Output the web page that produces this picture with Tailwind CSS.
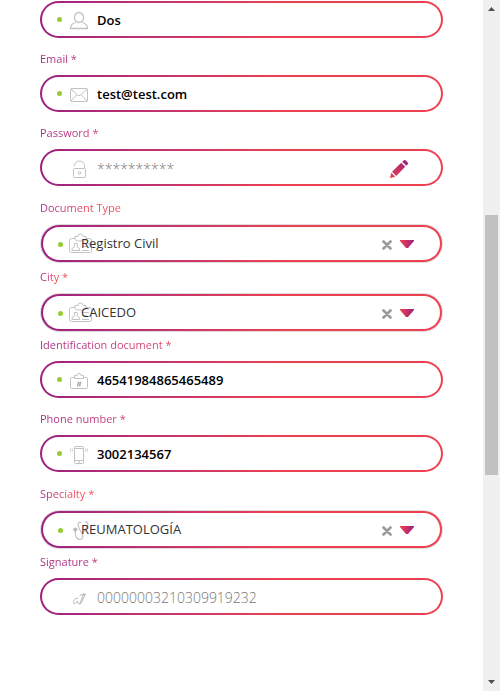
<!DOCTYPE html>
<html lang="en">
<head>
<meta charset="utf-8">
<meta name="viewport" content="width=device-width, initial-scale=1">
<title>Profile form</title>
<script src="https://cdn.jsdelivr.net/npm/@tailwindcss/browser@4"></script>
</head>
<body class="flex min-h-screen bg-white font-['Open_Sans',sans-serif] text-[13px]">
<svg class="absolute h-0 w-0" aria-hidden="true">
  <defs>
    <linearGradient id="caretFill" x1="0" y1="0" x2="1" y2="0"><stop offset="0" stop-color="#ee4050"/><stop offset="1" stop-color="#9c2080"/></linearGradient>
    <linearGradient id="penFill" x1="0" y1="1" x2="1" y2="0"><stop offset="0" stop-color="#ee4050"/><stop offset="1" stop-color="#9c2080"/></linearGradient>
    <symbol id="badge" viewBox="0 0 24 24"><g fill="none" stroke="#c2c2c2"><path d="M7 6.500H3.500a2 2 0 0 0-2 2v10a2 2 0 0 0 2 2h18a2 2 0 0 0 2-2v-10a2 2 0 0 0-2-2H18"/><path d="M7 7.500v-3h3a2.500 2.500 0 0 1 5 0h3v3l-2 1.500H9z"/><path d="M4 18.500h7.500v-2l-2.300-1.500v-3.500h-2.800V15L4 16.500zM14 11.500h7M14 14.500h5M14 18.500h7"/></g></symbol>
    <symbol id="cross" viewBox="0 0 10 10"><path d="M1.500 1.500l7 7M8.500 1.500l-7 7" stroke="#999" stroke-width="2.600" stroke-linecap="round"/></symbol>
    <symbol id="caret" viewBox="0 0 14 8"><path d="M0 0h14v1L8 8H6L0 1z" fill="url(#caretFill)"/></symbol>
  </defs>
</svg>
<main class="min-w-0 flex-1 px-10 pt-px">
  <form>
    <div class="pb-[13px]">
      <div class="rounded-full bg-linear-to-r from-[#9c2080] to-[#ee4050] to-60% p-0.5">
        <div class="flex h-[33px] items-center rounded-full bg-white pr-8 pl-[15px]">
          <span class="size-[5px] rounded-full bg-[#95cc33]"></span>
          <svg class="mr-1.5 ml-[5px] size-6 shrink-0" viewBox="0 0 24 24" fill="none" stroke="#c2c2c2" stroke-width="1.300"><ellipse cx="12" cy="9.500" rx="4.600" ry="5"/><path d="M8.500 14.500C5 15.500 3.500 17 3.500 20.500h17c0-3.500-1.500-5-5-6"/></svg>
          <input id="name" aria-label="Last name" value="Dos" class="w-full min-w-0 flex-1 pt-0.5 font-semibold text-black outline-none">
        </div>
      </div>
    </div>

    <div class="pb-[13px]">
      <label for="email" class="mb-2 block w-40 bg-linear-to-r from-[#a52a88] to-[#ee4a5c] bg-clip-text text-[11px] leading-4 text-transparent">Email *</label>
      <div class="rounded-full bg-linear-to-r from-[#9c2080] to-[#ee4050] to-60% p-0.5">
        <div class="flex h-[33px] items-center rounded-full bg-white pr-8 pl-[15px]">
          <span class="size-[5px] rounded-full bg-[#95cc33]"></span>
          <svg class="mr-1.5 ml-[5px] size-6 shrink-0" viewBox="0 0 24 24" fill="none" stroke="#c2c2c2"><rect x="3.500" y="6.500" width="17" height="13" rx="1.500"/><path d="M4 7l6.500 6q1.500 1.200 3 0L20 7M4 19l5.500-6M20 19l-5.500-6"/></svg>
          <input id="email" type="email" value="test@test.com" class="w-full min-w-0 flex-1 pt-0.5 font-semibold text-black outline-none">
        </div>
      </div>
    </div>

    <div class="pb-[13px]">
      <label for="password" class="mb-2 block w-30 bg-linear-to-r from-[#a52a88] to-[#ee4a5c] bg-clip-text text-[11px] leading-4 text-transparent">Password *</label>
      <div class="rounded-full bg-linear-to-r from-[#9c2080] to-[#ee4050] to-60% p-0.5">
        <div class="flex h-[33px] items-center rounded-full bg-white pr-8 pl-5">
          <svg class="mr-1.5 ml-[5px] size-6 shrink-0" viewBox="0 0 24 24" fill="none" stroke="#c2c2c2"><rect x="6.500" y="12.500" width="12" height="9" rx="1"/><path d="M7.500 10.500V9.500a5 4.500 0 0 1 10 0V12"/><circle cx="12.500" cy="17" r="1.300"/></svg>
          <input id="password" placeholder="**********" class="w-full min-w-0 flex-1 pt-0.5 text-[14px] font-light outline-none placeholder:text-[#777]">
          <button type="button" aria-label="Edit password" class="ml-2"><svg class="size-[20px]" viewBox="0 0 20 20" fill="url(#penFill)"><path d="M1 20l1.200-5.200 4 4zM3 13.800L12.200 4.800l4 4L7.200 18zM13.200 3.800l1.300-1.300q1.200-1 2.400 0l1.700 1.700q1 1.200 0 2.300L17.200 7.800z"/></svg></button>
        </div>
      </div>
    </div>

    <div class="pt-px pb-[5px]">
      <label for="doctype" class="mb-2 block w-fit bg-linear-to-r from-[#a52a88] to-[#ee4a5c] to-60% bg-clip-text text-[11px] leading-4 text-transparent">Document Type</label>
      <div class="rounded-full border border-[#ddd] bg-linear-to-r from-[#9c2080] to-[#ee4050] to-60% bg-origin-border p-0.5">
        <div class="relative flex h-[33px] items-center rounded-full bg-white pr-[26px] pl-[15px]">
          <span class="mt-0.5 size-[5px] rounded-full bg-[#95cc33]"></span>
          <svg class="ml-[5px] size-6 shrink-0"><use href="#badge"/></svg>
          <select id="doctype" class="absolute inset-0 appearance-none rounded-full bg-transparent pr-16 pl-[38px] text-[#333] outline-none"><option>Registro Civil</option></select>
          <button type="button" aria-label="Clear document type" class="relative mt-0.5 ml-auto"><svg class="size-2.5"><use href="#cross"/></svg></button>
          <svg class="pointer-events-none ml-2 h-2 w-3.5"><use href="#caret"/></svg>
        </div>
      </div>
    </div>

    <div class="pt-px pb-[5px]">
      <label for="city" class="mb-2 block w-fit bg-linear-to-r from-[#a52a88] to-[#ee4a5c] to-60% bg-clip-text text-[11px] leading-4 text-transparent">City *</label>
      <div class="rounded-full border border-[#ddd] bg-linear-to-r from-[#9c2080] to-[#ee4050] to-60% bg-origin-border p-0.5">
        <div class="relative flex h-[33px] items-center rounded-full bg-white pr-[26px] pl-[15px]">
          <span class="mt-0.5 size-[5px] rounded-full bg-[#95cc33]"></span>
          <svg class="ml-[5px] size-6 shrink-0"><use href="#badge"/></svg>
          <select id="city" class="absolute inset-0 appearance-none rounded-full bg-transparent pr-16 pl-[38px] text-[#333] outline-none"><option>CAICEDO</option></select>
          <button type="button" aria-label="Clear city" class="relative mt-0.5 ml-auto"><svg class="size-2.5"><use href="#cross"/></svg></button>
          <svg class="pointer-events-none ml-2 h-2 w-3.5"><use href="#caret"/></svg>
        </div>
      </div>
    </div>

    <div class="pb-[13px]">
      <label for="ident" class="mb-2 block w-40 bg-linear-to-r from-[#a52a88] to-[#ee4a5c] bg-clip-text text-[11px] leading-4 text-transparent">Identification document *</label>
      <div class="rounded-full bg-linear-to-r from-[#9c2080] to-[#ee4050] to-60% p-0.5">
        <div class="flex h-[33px] items-center rounded-full bg-white pr-8 pl-[15px]">
          <span class="size-[5px] rounded-full bg-[#95cc33]"></span>
          <svg class="mr-1.5 ml-[5px] size-6 shrink-0" viewBox="0 0 24 24" fill="none" stroke="#c2c2c2"><path d="M7.500 9.500h-3a1 1 0 0 0-1 1v9a1 1 0 0 0 1 1h15a1 1 0 0 0 1-1v-9a1 1 0 0 0-1-1h-3M7.500 10.500v-3H10a2 2 0 0 1 4 0h2.500v3z"/><path stroke="#999" stroke-width=".8" d="M11.500 13.500l-1 5M13.500 13.500l-1 5M10.500 15h4M10 17h4"/></svg>
          <input id="ident" value="46541984865465489" class="w-full min-w-0 flex-1 pt-0.5 font-semibold text-black outline-none">
        </div>
      </div>
    </div>

    <div class="pb-[13px]">
      <label for="phone" class="mb-2 block w-40 bg-linear-to-r from-[#a52a88] to-[#ee4a5c] bg-clip-text text-[11px] leading-4 text-transparent">Phone number *</label>
      <div class="rounded-full bg-linear-to-r from-[#9c2080] to-[#ee4050] to-60% p-0.5">
        <div class="flex h-[33px] items-center rounded-full bg-white pr-8 pl-[15px]">
          <span class="size-[5px] rounded-full bg-[#95cc33]"></span>
          <svg class="mr-1.5 ml-[5px] size-6 shrink-0" viewBox="0 0 24 24" fill="none" stroke="#c2c2c2"><rect x="7.500" y="4.500" width="9" height="17" rx="1"/><path d="M8 6.500h8M8 18.500h8M11 20h2"/><path stroke-width=".9" stroke="#d0d0d0" d="M5.500 6.500v3M3.700 6v4M18.500 6.500v3M20.300 6v4"/></svg>
          <input id="phone" type="tel" value="3002134567" class="w-full min-w-0 flex-1 pt-0.5 font-semibold text-black outline-none">
        </div>
      </div>
    </div>

    <div class="pt-px pb-[5px]">
      <label for="specialty" class="mb-2 block w-fit bg-linear-to-r from-[#a52a88] to-[#ee4a5c] to-60% bg-clip-text text-[11px] leading-4 text-transparent">Specialty *</label>
      <div class="rounded-full border border-[#ddd] bg-linear-to-r from-[#9c2080] to-[#ee4050] to-60% bg-origin-border p-0.5">
        <div class="relative flex h-[33px] items-center rounded-full bg-white pr-[26px] pl-[15px]">
          <span class="mt-0.5 size-[5px] rounded-full bg-[#95cc33]"></span>
          <svg class="ml-[5px] size-6 shrink-0" viewBox="0 0 24 24" fill="none" stroke="#c2c2c2" stroke-width="1.200"><circle cx="7.300" cy="11.500" r="2.100" fill="#bbb" stroke="none"/><path d="M7.300 13c-.3 4 1 8.500 4.200 8.500 3.500 0 4-3 2.500-7M13 4.500c-3-.5-3.500 1-2.500 4 1 2.500 2 6 3.500 6s4.500-3.500 5.500-6.500c1-3 .5-4.500-2.500-4"/></svg>
          <select id="specialty" class="absolute inset-0 appearance-none rounded-full bg-transparent pr-16 pl-[38px] text-[#333] outline-none"><option>REUMATOLOGÍA</option></select>
          <button type="button" aria-label="Clear specialty" class="relative mt-0.5 ml-auto"><svg class="size-2.5"><use href="#cross"/></svg></button>
          <svg class="pointer-events-none ml-2 h-2 w-3.5"><use href="#caret"/></svg>
        </div>
      </div>
    </div>

    <div class="pb-[13px]">
      <label for="signature" class="mb-2 block w-60 bg-linear-to-r from-[#a52a88] to-[#ee4a5c] bg-clip-text text-[11px] leading-4 text-transparent">Signature *</label>
      <div class="rounded-full bg-linear-to-r from-[#9c2080] to-[#ee4050] to-60% p-0.5">
        <div class="flex h-[33px] items-center rounded-full bg-white pr-8 pl-5">
          <svg class="mr-1.5 ml-[5px] size-6 shrink-0" viewBox="0 0 24 24" fill="none" stroke="#b8b8b8" stroke-linecap="round"><path d="M10.500 13.500c-2-1-4 2-4 4 0 2.500 2.500 1 4-1.500-.3 2 0 3 1.500 2"/><path d="M16.500 9l-3 8-1 2.500 2-2L18 9.500zM13 10.500q2-2 5.500-1"/></svg>
          <input id="signature" placeholder="00000003210309919232" class="w-full min-w-0 flex-1 pt-0.5 text-[14px] font-light outline-none placeholder:text-[#777]">
        </div>
      </div>
    </div>
  </form>
</main>
<div class="sticky top-0 flex h-screen w-[17px] flex-col items-center bg-[#f0f0f0]" aria-hidden="true">
  <svg class="h-[17px] w-[17px]" viewBox="0 0 17 17"><path d="M5 11l3.500-4 3.500 4z" fill="#505050"/></svg>
  <div class="flex w-full flex-1 flex-col px-0.5">
    <div class="grow-[198]"></div>
    <div class="grow-[260] bg-[#c1c1c1]"></div>
    <div class="grow-[199]"></div>
  </div>
  <svg class="h-[17px] w-[17px]" viewBox="0 0 17 17"><path d="M5 6l3.500 4L12 6z" fill="#505050"/></svg>
</div>
</body>
</html>
